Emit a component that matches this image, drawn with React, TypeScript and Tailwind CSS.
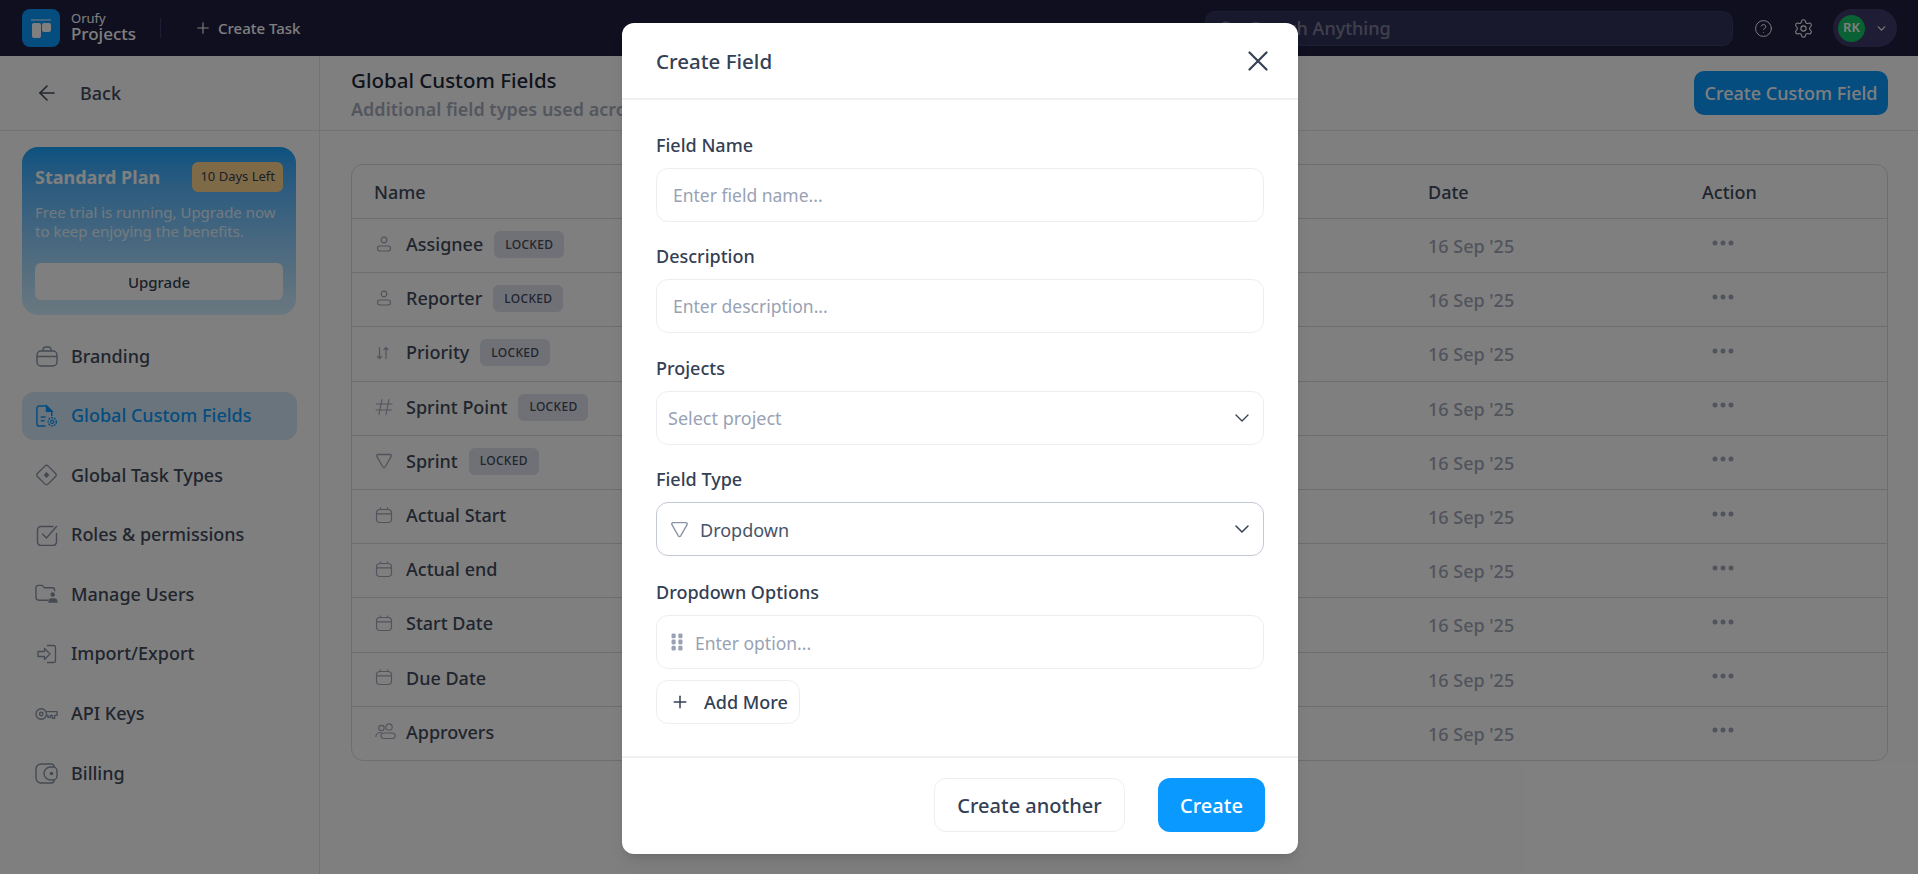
import type { FC, ReactNode } from "react";
import { ArrowLeft, Plus, Search, CircleHelp, Settings, ChevronDown } from "lucide-react";

const font = { fontFamily: '"Noto Sans", sans-serif' };

const BriefcaseIcon = () => (
  <svg width="22" height="21" viewBox="0 0 22 21" fill="none" stroke="currentColor" strokeWidth="1.4">
    <rect x="1" y="5" width="20" height="15" rx="4" />
    <path d="M7 5V3.500A2.500 2.500 0 0 1 9.500 1h3A2.500 2.500 0 0 1 15 3.500V5M1 10.500h20" />
  </svg>
);

const FileGearIcon = () => (
  <svg width="24" height="24" viewBox="0 0 24 24" fill="none" stroke="currentColor" strokeWidth="1.5">
    <path d="M11 22.500H4.500A2.500 2.500 0 0 1 2 20V4a2.500 2.500 0 0 1 2.500-2.500H12L17.500 7v5" />
    <path d="M12 1.500V7h5.500z" fill="currentColor" />
    <path d="M6 13h5M6 17h4" />
    <circle cx="18" cy="18" r="1.700" strokeWidth="1.200" />
    <circle cx="18" cy="18" r="4.300" strokeWidth="1.500" strokeDasharray="2 1.100" />
  </svg>
);

const DiamondIcon = () => (
  <svg width="24" height="24" viewBox="0 0 24 24" fill="none" stroke="currentColor" strokeWidth="1.4">
    <rect x="4.200" y="4.200" width="15.600" height="15.600" rx="2.500" transform="rotate(45 12 12)" />
    <rect x="9.800" y="9.800" width="4.400" height="4.400" rx="0.500" fill="currentColor" stroke="none" transform="rotate(45 12 12)" />
  </svg>
);

const CheckBoxIcon = () => (
  <svg width="22" height="22" viewBox="0 0 22 22" fill="none" stroke="currentColor" strokeWidth="1.4" strokeLinecap="round">
    <path d="M17 2.500H5A3.500 3.500 0 0 0 1.500 6v12A3.500 3.500 0 0 0 5 21.500h12a3.500 3.500 0 0 0 3.500-3.500V9.500" />
    <path d="M6.500 10l4 4L20.500 2.500" />
  </svg>
);

const FolderUserIcon = () => (
  <svg width="24" height="20" viewBox="0 0 24 20" fill="none" stroke="currentColor" strokeWidth="1.4">
    <path d="M14 16.500H4A3 3 0 0 1 1 13.500V3.500A2.500 2.500 0 0 1 3.500 1h4L10 3.500h8A2.500 2.500 0 0 1 20.500 6v1" />
    <circle cx="18.500" cy="10.500" r="2.300" fill="currentColor" stroke="none" />
    <path d="M14 19v-1.500A3 3 0 0 1 17 14.500h3a3.500 3.500 0 0 1 3.500 3V19z" fill="currentColor" stroke="none" />
  </svg>
);

const ImportIcon = () => (
  <svg width="20" height="20" viewBox="0 0 20 20" fill="none" stroke="currentColor" strokeWidth="1.3" strokeLinejoin="round">
    <path d="M10 1.500h6.500a2 2 0 0 1 2 2v13a2 2 0 0 1-2 2H10" />
    <path d="M1 7.500h6.500V4.500L13 10l-5.500 5.500v-3H1z" />
  </svg>
);

const KeyIcon = () => (
  <svg width="24" height="16" viewBox="0 0 24 16" fill="none" stroke="currentColor" strokeWidth="1.4" strokeLinejoin="round">
    <circle cx="6.500" cy="8" r="5.500" />
    <circle cx="6.500" cy="8" r="1.800" />
    <path d="M12 5.500h11v4h-2.500v3h-2.500v-3h-2v2h-2.500v-2H12" />
  </svg>
);

const WalletIcon = () => (
  <svg width="23" height="21" viewBox="0 0 23 21" fill="none" stroke="currentColor" strokeWidth="1.4">
    <path d="M19 4V3.500A2.500 2.500 0 0 0 16.500 1H6A5 5 0 0 0 1 6v9a5 5 0 0 0 5 5h10.500a2.500 2.500 0 0 0 2.500-2.500V17" />
    <path d="M15.500 4H18a4 4 0 0 1 4 4v5a4 4 0 0 1-4 4h-2.500a6.500 6.500 0 0 1 0-13z" />
    <circle cx="16.500" cy="10.500" r="1.800" fill="currentColor" stroke="none" />
  </svg>
);

const PersonIcon = () => (
  <svg width="18" height="18" viewBox="0 0 18 18" fill="none" stroke="currentColor" strokeWidth="1.2">
    <circle cx="9" cy="4" r="2.800" />
    <rect x="2.500" y="10" width="13" height="5" rx="2.500" />
  </svg>
);

const CalendarIcon = () => (
  <svg width="18" height="18" viewBox="0 0 18 18" fill="none" stroke="currentColor" strokeWidth="1.2">
    <rect x="1.500" y="2.500" width="15" height="13" rx="3.500" />
    <path d="M1.500 6.800h15M5.500 .4v2.400M12.500 .4v2.400" />
  </svg>
);

const SortIcon = () => (
  <svg width="16" height="16" viewBox="0 0 16 16" fill="none" stroke="currentColor" strokeWidth="1.200" strokeLinecap="round" strokeLinejoin="round">
    <path d="M4.500 2.500v11M2.500 11.500l2 2 2-2M11 13.500v-11M9 4.500l2-2 2 2" />
  </svg>
);

const HashIcon = () => (
  <svg width="18" height="18" viewBox="0 0 18 18" fill="none" stroke="currentColor" strokeWidth="1.100" strokeLinecap="round">
    <path d="M7 1.500L4 16.500M14 1.500L11 16.500M1.500 6h15.500M1 12h15.500" />
  </svg>
);

const PeopleIcon = () => (
  <svg width="21" height="18" viewBox="0 0 21 18" fill="none" stroke="currentColor" strokeWidth="1.150">
    <circle cx="6.500" cy="5" r="2.700" />
    <circle cx="14" cy="4" r="3.200" />
    <path d="M.8 14c0-3 2.600-4.800 5.700-4.800" />
    <rect x="6" y="10" width="14.200" height="5.500" rx="2.750" />
  </svg>
);

const TriangleIcon: FC<{ size?: number }> = ({ size = 18 }) => (
  <svg width={size} height={size} viewBox="0 0 18 18" fill="none" stroke="currentColor" strokeWidth="1.3" strokeLinejoin="round">
    <path d="M2.900 2.500h12.200c1 0 1.600 1 1.100 1.900L10.100 15c-.5.800-1.700.8-2.200 0L1.800 4.400c-.5-.9.100-1.900 1.100-1.900z" />
  </svg>
);

const DragDots = () => (
  <svg width="12" height="18" viewBox="0 0 12 18" fill="#98a2b3">
    <rect x="0.500" y="0.500" width="4.200" height="4.800" rx="1.300" />
    <rect x="7.300" y="0.500" width="4.200" height="4.800" rx="1.300" />
    <rect x="0.500" y="6.600" width="4.200" height="4.800" rx="1.300" />
    <rect x="7.300" y="6.600" width="4.200" height="4.800" rx="1.300" />
    <rect x="0.500" y="12.700" width="4.200" height="4.800" rx="1.300" />
    <rect x="7.300" y="12.700" width="4.200" height="4.800" rx="1.300" />
  </svg>
);

const ThreeDots = () => (
  <svg width="22" height="6" viewBox="0 0 22 6" fill="currentColor">
    <circle cx="3" cy="3" r="2.500" />
    <circle cx="11" cy="3" r="2.500" />
    <circle cx="19" cy="3" r="2.500" />
  </svg>
);

const navItems: { label: string; icon: ReactNode; active?: boolean }[] = [
  { label: "Branding", icon: <BriefcaseIcon /> },
  { label: "Global Custom Fields", icon: <FileGearIcon />, active: true },
  { label: "Global Task Types", icon: <DiamondIcon /> },
  { label: "Roles & permissions", icon: <CheckBoxIcon /> },
  { label: "Manage Users", icon: <FolderUserIcon /> },
  { label: "Import/Export", icon: <ImportIcon /> },
  { label: "API Keys", icon: <KeyIcon /> },
  { label: "Billing", icon: <WalletIcon /> },
];

const rows: { name: string; icon: ReactNode; locked?: boolean }[] = [
  { name: "Assignee", icon: <PersonIcon />, locked: true },
  { name: "Reporter", icon: <PersonIcon />, locked: true },
  { name: "Priority", icon: <SortIcon />, locked: true },
  { name: "Sprint Point", icon: <HashIcon />, locked: true },
  { name: "Sprint", icon: <TriangleIcon />, locked: true },
  { name: "Actual Start", icon: <CalendarIcon /> },
  { name: "Actual end", icon: <CalendarIcon /> },
  { name: "Start Date", icon: <CalendarIcon /> },
  { name: "Due Date", icon: <CalendarIcon /> },
  { name: "Approvers", icon: <PeopleIcon /> },
];

const Header = () => (
  <header className="flex h-14 shrink-0 items-center bg-[#1e1e40] pl-[22px] pr-[21px]">
    <div className="flex h-[38px] w-[38px] flex-col items-center justify-center gap-[2px] rounded-lg bg-[#0a99ff]">
      <span className="h-[2px] w-[20px] bg-white/50" />
      <div className="flex gap-[1px]">
        <span className="h-[15px] w-[9px] rounded-[2px] bg-white" />
        <span className="h-[9px] w-[9px] rounded-[2px] bg-white" />
      </div>
    </div>
    <div className="-mt-[3px] ml-[11px] flex w-[89px] flex-col text-white">
      <span className="text-[13px] leading-[13px]">Orufy</span>
      <span className="text-[17px] font-medium leading-[17px]">Projects</span>
    </div>
    <span className="h-5 w-px bg-[#3a3a66]" />
    <button className="ml-[33px] flex items-center gap-[6px] text-[15px] font-medium text-white">
      <Plus size={18} strokeWidth={1.5} />
      Create Task
    </button>
    <div className="ml-auto flex h-[35px] w-[528px] items-center gap-[15px] rounded-[10px] border border-[#3a3a66] bg-[#32325c] pl-[12px] text-[18px] font-medium text-white/40">
      <Search size={17} />
      Search Anything
    </div>
    <CircleHelp size={19} strokeWidth={1.2} className="ml-[21px] text-white" />
    <Settings size={21} strokeWidth={1.2} className="ml-[20px] text-white" />
    <div className="ml-[19px] flex h-[38px] w-[64px] items-center gap-[10px] rounded-full bg-[#3f3b6a] pl-[5px]">
      <span className="flex h-[27px] w-[27px] items-center justify-center rounded-full bg-[#14c266] text-[13px] font-semibold text-white">
        RK
      </span>
      <ChevronDown size={13} className="text-white" />
    </div>
  </header>
);

const Sidebar = () => (
  <aside className="flex w-[320px] shrink-0 flex-col border-r border-[#e5e7eb]">
    <div className="flex h-[75px] shrink-0 items-center gap-[21px] border-b border-[#e5e7eb] pl-[35px] text-[18px] font-medium text-[#414a5c]">
      <ArrowLeft size={24} strokeWidth={1.6} />
      Back
    </div>
    <div className="ml-[22px] mt-4 h-[168px] w-[274px] rounded-2xl bg-gradient-to-b from-[#14a4ff] to-[#d4f0ff] px-[13px] pt-[15px]">
      <div className="flex items-center justify-between">
        <span className="text-[18px] font-bold text-white">Standard Plan</span>
        <span className="flex h-[30px] items-center rounded-md bg-[#ffd48f] px-2 text-[13px] text-[#344054]">10 Days Left</span>
      </div>
      <p className="mt-[11px] whitespace-nowrap text-[15px] leading-[19px] text-white/80">
        Free trial is running, Upgrade now
        <br />
        to keep enjoying the benefits.
      </p>
      <button className="mt-[22px] h-[37px] w-full rounded-md bg-white pt-[1px] text-[15px] font-medium text-[#344054]">Upgrade</button>
    </div>
    <nav className="ml-[22px] mt-[17px] flex w-[275px] flex-col gap-[11.6px]">
      {navItems.map((item) => (
        <div
          key={item.label}
          className={`flex h-12 items-center gap-[13px] rounded-xl pl-[13px] text-[18px] font-medium ${
            item.active ? "bg-[#d5e9f9] text-[#0a99ff]" : "text-[#414a5c]"
          }`}
        >
          <span className={`flex w-[23px] justify-center ${item.active ? "text-[#0a99ff]" : "text-[#8a94a6]"}`}>{item.icon}</span>
          {item.label}
        </div>
      ))}
    </nav>
  </aside>
);

const MainContent = () => (
  <main className="min-w-0 flex-1">
    <div className="flex h-[75px] items-center justify-between border-b border-[#e5e7eb] pl-[31px] pr-[30px]">
      <div className="pt-[1px]">
        <h1 className="text-[20.5px] font-medium leading-[26px] text-[#1d2939]">Global Custom Fields</h1>
        <p className="mt-[4px] text-[18px] font-semibold leading-[24px] text-[#a8adbd]">Additional field types used across projects</p>
      </div>
      <button className="h-[44px] w-[194px] rounded-[10px] bg-[#0a99ff] text-[18px] font-medium text-white">Create Custom Field</button>
    </div>
    <div className="ml-[31px] mr-[30px] mt-[33px] overflow-hidden rounded-xl border border-[#d8dce3]">
      <div className="grid h-[53px] grid-cols-[1076px_274px_1fr] items-center pt-[1px] text-[18px] font-medium text-[#414a5c]">
        <span className="pl-[22px]">Name</span>
        <span>Date</span>
        <span>Action</span>
      </div>
      {rows.map((row) => (
        <div key={row.name} className="grid h-[54.2px] grid-cols-[1076px_274px_1fr] items-center border-t border-[#d8dce3]">
          <div className="-mt-[2px] flex items-center pl-[22px] text-[18px] font-medium text-[#414a5c]">
            <span className="flex w-[32px] pl-[1px] text-[#a3a8b8]">{row.icon}</span>
            {row.name}
            {row.locked && (
              <span className="ml-[11px] flex h-[27px] items-center rounded-md bg-[#e0e3ec] px-[11px] text-[12px] font-medium tracking-[0.3px]">
                LOCKED
              </span>
            )}
          </div>
          <span className="pt-[2px] text-[18px] font-medium text-[#a3a8b8]">16 Sep '25</span>
          <span className="-mt-[6px] pl-[10px] text-[#a3a8b8]">
            <ThreeDots />
          </span>
        </div>
      ))}
    </div>
  </main>
);

const FieldLabel: FC<{ children: ReactNode }> = ({ children }) => (
  <label className="block text-[18px] font-medium leading-[22px] text-[#344054]">{children}</label>
);

const TextField: FC<{ placeholder: string }> = ({ placeholder }) => (
  <input
    placeholder={placeholder}
    className="mt-[12px] h-[54px] w-full rounded-xl border-[1.5px] border-[#eceef1] px-[16px] text-[17.5px] outline-none placeholder:text-[#98a2b3]"
  />
);

const CreateFieldModal = () => (
  <div className="absolute inset-0 flex justify-center bg-black/50 pl-[2px] pt-[23px]">
    <div className="flex h-[831px] w-[676px] flex-col rounded-xl bg-white shadow-lg">
      <div className="flex h-[77px] shrink-0 items-center justify-between border-b-2 border-[#f0f0f2] pl-[34px] pr-[30px]">
        <h2 className="pt-[2px] text-[20.5px] font-medium text-[#344054]">Create Field</h2>
        <svg width="20" height="20" viewBox="0 0 20 20" fill="none" stroke="#344054" strokeWidth="2.200" strokeLinecap="round">
          <path d="M1.500 1.500l17 17M18.500 1.500l-17 17" />
        </svg>
      </div>
      <div className="flex-1 px-[34px] pt-[34px]">
        <FieldLabel>Field Name</FieldLabel>
        <TextField placeholder="Enter field name..." />
        <div className="mt-[23px]">
          <FieldLabel>Description</FieldLabel>
          <TextField placeholder="Enter description..." />
        </div>
        <div className="mt-[24px]">
          <FieldLabel>Projects</FieldLabel>
          <div className="mt-[12px] flex h-[54px] items-center justify-between rounded-xl border-[1.5px] border-[#eceef1] pl-[11px] pr-[9px] text-[18px] text-[#98a2b3]">
            <span className="pt-[1px]">Select project</span>
            <ChevronDown size={24} strokeWidth={1.3} className="text-[#344054]" />
          </div>
        </div>
        <div className="mt-[23px]">
          <FieldLabel>Field Type</FieldLabel>
          <div className="mt-[12px] flex h-[54px] items-center rounded-xl border-[1.5px] border-[#c3c8d6] pl-[13px] pr-[9px] text-[18px] text-[#475467]">
            <span className="text-[#8a93a5]">
              <TriangleIcon size={19} />
            </span>
            <span className="ml-[11px] pt-[2px]">Dropdown</span>
            <ChevronDown size={24} strokeWidth={1.5} className="ml-auto text-[#344054]" />
          </div>
        </div>
        <div className="mt-[25px]">
          <FieldLabel>Dropdown Options</FieldLabel>
          <div className="mt-[12px] flex h-[54px] items-center gap-[12px] rounded-xl border-[1.5px] border-[#eceef1] pl-[14px]">
            <DragDots />
            <input placeholder="Enter option..." className="flex-1 pt-[3px] text-[17.5px] outline-none placeholder:text-[#98a2b3]" />
          </div>
        </div>
        <button className="mt-[11px] flex h-[44px] w-[144px] items-center gap-[14px] rounded-xl border-[1.5px] border-[#eceef1] pl-[13px] text-[18px] font-medium text-[#344054]">
          <Plus size={20} strokeWidth={1.8} />
          <span className="pt-[1px]">Add More</span>
        </button>
      </div>
      <div className="flex h-[98px] shrink-0 items-start justify-end gap-[33px] border-t-2 border-[#f0f0f2] pr-[33px] pt-[20px]">
        <button className="h-[54px] w-[191px] rounded-xl border-[1.5px] border-[#eceef1] pt-[2px] text-[20px] font-medium text-[#344054]">Create another</button>
        <button className="h-[54px] w-[107px] rounded-xl bg-[#0a99ff] pt-[2px] text-[20px] font-medium text-white">Create</button>
      </div>
    </div>
  </div>
);

export default function App() {
  return (
    <div className="relative flex h-screen flex-col overflow-hidden bg-white" style={font}>
      <Header />
      <div className="flex flex-1">
        <Sidebar />
        <MainContent />
      </div>
      <CreateFieldModal />
    </div>
  );
}
